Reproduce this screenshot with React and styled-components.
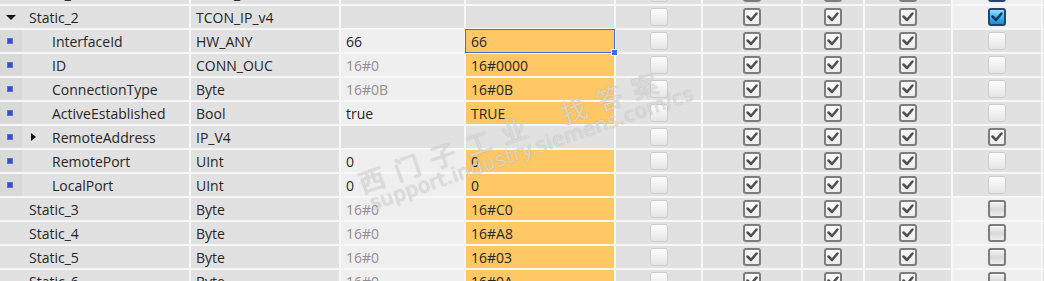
import React from 'react'
import styled, { createGlobalStyle, css } from 'styled-components'

const GlobalStyle = createGlobalStyle`
  html, body {
    margin: 0;
    padding: 0;
    background: #e1e1e1;
  }
  body {
    font-family: "Open Sans", "Liberation Sans", sans-serif;
  }
`

const rows = [
  { kind: 'static', name: 'Static_1', type: 'TCON_Param', c8: 'blue' },
  { kind: 'static', name: 'Static_2', type: 'TCON_IP_v4', c8: 'blue', open: 'down' },
  { kind: 'member', name: 'InterfaceId', type: 'HW_ANY', def: '66', start: '66', selected: true, c8: 'off' },
  { kind: 'member', name: 'ID', type: 'CONN_OUC', def: '16#0', dim: true, start: '16#0000', c8: 'off' },
  { kind: 'member', name: 'ConnectionType', type: 'Byte', def: '16#0B', dim: true, start: '16#0B', c8: 'off' },
  { kind: 'member', name: 'ActiveEstablished', type: 'Bool', def: 'true', start: 'TRUE', c8: 'off' },
  { kind: 'member', name: 'RemoteAddress', type: 'IP_V4', struct: true, open: 'right', c8: 'checked' },
  { kind: 'member', name: 'RemotePort', type: 'UInt', def: '0', start: '0', c8: 'off' },
  { kind: 'member', name: 'LocalPort', type: 'UInt', def: '0', start: '0', c8: 'off' },
  { kind: 'plain', name: 'Static_3', type: 'Byte', def: '16#0', dim: true, start: '16#C0', c8: 'empty' },
  { kind: 'plain', name: 'Static_4', type: 'Byte', def: '16#0', dim: true, start: '16#A8', c8: 'empty' },
  { kind: 'plain', name: 'Static_5', type: 'Byte', def: '16#0', dim: true, start: '16#03', c8: 'empty' },
  { kind: 'plain', name: 'Static_6', type: 'Byte', def: '16#0', dim: true, start: '16#0A', c8: 'empty' },
]

const Check = ({ variant }) => {
  const on = variant === 'checked' || variant === 'blue'
  return (
    <Box $variant={variant}>
      {on && (
        <svg width="14" height="14" viewBox="0 0 14 14">
          <polyline
            points="2.5,6.5 6,10 11.5,3.5"
            fill="none"
            stroke={variant === 'blue' ? '#163560' : '#4f4f4f'}
            strokeWidth="2.5"
            strokeLinecap="round"
            strokeLinejoin="round"
          />
        </svg>
      )}
    </Box>
  )
}

const Row = ({ row }) => {
  const isStatic = row.kind === 'static'
  const member = row.kind === 'member'
  const blankVals = isStatic || row.struct

  return (
    <Line>
      <NameCell>
        <Gutter $member={member}>
          {member && <Marker />}
          {row.open === 'down' && <TriDown />}
        </Gutter>
        {member ? (
          <Twist>{row.open === 'right' && <TriRight />}</Twist>
        ) : (
          <Spacer />
        )}
        <Text>{row.name}</Text>
      </NameCell>
      <Cell>
        <Text>{row.type}</Text>
      </Cell>
      <Cell $tone={blankVals ? 'base' : 'light'}>
        <Text $dim={row.dim}>{row.def}</Text>
      </Cell>
      <Cell $tone={blankVals ? 'base' : 'orange'} $selected={row.selected}>
        <Text>{row.start}</Text>
        {row.selected && <Handle />}
      </Cell>
      <BoxCell>
        <Check variant="off" />
      </BoxCell>
      <BoxCell>
        <Check variant="checked" />
      </BoxCell>
      <BoxCell>
        <Check variant="checked" />
      </BoxCell>
      <BoxCell>
        <Check variant="checked" />
      </BoxCell>
      <BoxCell $tone={member ? 'base' : 'light'}>
        <Check variant={row.c8} />
      </BoxCell>
      <Cell />
    </Line>
  )
}

const App = () => {
  return (
    <Page>
      <GlobalStyle />
      <Table>
        {rows.map((r) => (
          <Row key={r.name} row={r} />
        ))}
      </Table>
      <Watermark>
        <Cn>
          西门子工业<Gap />找答案
        </Cn>
        <Url>support.industry.siemens.com/cs</Url>
      </Watermark>
    </Page>
  )
}

export default App

const Page = styled.div`
  position: relative;
  width: 1044px;
  height: 281px;
  overflow: hidden;
  background: #f7f7f7;
`

const Table = styled.div`
  display: flex;
  flex-direction: column;
  gap: 2px;
  margin-top: -18px;
`

const Line = styled.div`
  display: grid;
  grid-template-columns: 189px 148px 123px 148px 85px 98px 60px 86px 88px 1fr;
  column-gap: 2px;
  height: 22px;
`

const tones = {
  base: '#e1e1e1',
  light: '#efefef',
  orange: '#ffc864',
}

const Cell = styled.div`
  position: relative;
  display: flex;
  align-items: center;
  padding: 0 5px;
  background: ${(p) => tones[p.$tone || 'base']};
  min-width: 0;
  ${(p) =>
    p.$selected &&
    css`
      outline: 1px solid #3d6fd9;
      z-index: 1;
    `}
`

const BoxCell = styled(Cell)`
  justify-content: center;
  padding: 0;
`

const NameCell = styled(Cell)`
  padding: 0;
  align-items: stretch;
`

const Gutter = styled.div`
  width: 22px;
  flex: none;
  display: flex;
  align-items: center;
  justify-content: ${(p) => (p.$member ? 'flex-start' : 'center')};
  padding-left: ${(p) => (p.$member ? '7px' : '0')};
  box-sizing: border-box;
  background: ${(p) => (p.$member ? '#d9d9d9' : 'transparent')};
`

const Marker = styled.span`
  width: 6px;
  height: 6px;
  background: #3350c8;
  box-shadow: inset 0 0 0 1px #5a74d8;
`

const TriDown = styled.span`
  width: 0;
  height: 0;
  border-left: 5px solid transparent;
  border-right: 5px solid transparent;
  border-top: 5px solid #111;
`

const TriRight = styled.span`
  width: 0;
  height: 0;
  border-top: 4.5px solid transparent;
  border-bottom: 4.5px solid transparent;
  border-left: 5px solid #111;
`

const Twist = styled.div`
  width: 21px;
  margin-left: 9px;
  flex: none;
  display: flex;
  align-items: center;
`

const Spacer = styled.div`
  width: 7px;
  flex: none;
`

const Text = styled.span`
  align-self: center;
  font-size: 14px;
  color: ${(p) => (p.$dim ? '#8f8f8f' : '#262626')};
  white-space: nowrap;
`

const Handle = styled.span`
  position: absolute;
  right: -3px;
  bottom: -3px;
  width: 5px;
  height: 5px;
  background: #3d6fd9;
  box-shadow: 0 0 0 1px #f7f7f7;
`

const boxStyles = {
  off: css`
    border: 1px solid #cdcdcd;
    background: linear-gradient(#fefefe, #f2f2f2 45%, #e6e6e6);
  `,
  checked: css`
    border: 2px solid #7d7d7d;
    background: linear-gradient(#fbfbfb, #ececec);
  `,
  empty: css`
    border: 2px solid #7d7d7d;
    background: linear-gradient(#f6f6f6, #d8d8d8 50%, #eeeeee);
  `,
  blue: css`
    border: 2px solid #24446e;
    background: linear-gradient(#8fe3f8, #3fb4ec 50%, #1c8bd6);
  `,
}

const Box = styled.span`
  box-sizing: border-box;
  width: 18px;
  height: 18px;
  border-radius: 3px;
  display: flex;
  align-items: center;
  justify-content: center;
  ${(p) => boxStyles[p.$variant]}
`

const Watermark = styled.div`
  position: absolute;
  left: 355px;
  top: 171px;
  transform: rotate(-19deg);
  transform-origin: left top;
  pointer-events: none;
  color: rgba(255, 255, 255, 0.6);
  text-shadow: 0 0 1px rgba(110, 110, 110, 0.6);
  white-space: nowrap;
  line-height: 1;
`

const Cn = styled.div`
  display: flex;
  font-family: "Noto Sans CJK SC", sans-serif;
  font-size: 26px;
  letter-spacing: 11.5px;
`

const Gap = styled.span`
  width: 26px;
`

const Url = styled.div`
  font-family: "DejaVu Sans", sans-serif;
  font-size: 20px;
  letter-spacing: 0.4px;
  margin-top: 0;
  margin-left: 4px;
`
